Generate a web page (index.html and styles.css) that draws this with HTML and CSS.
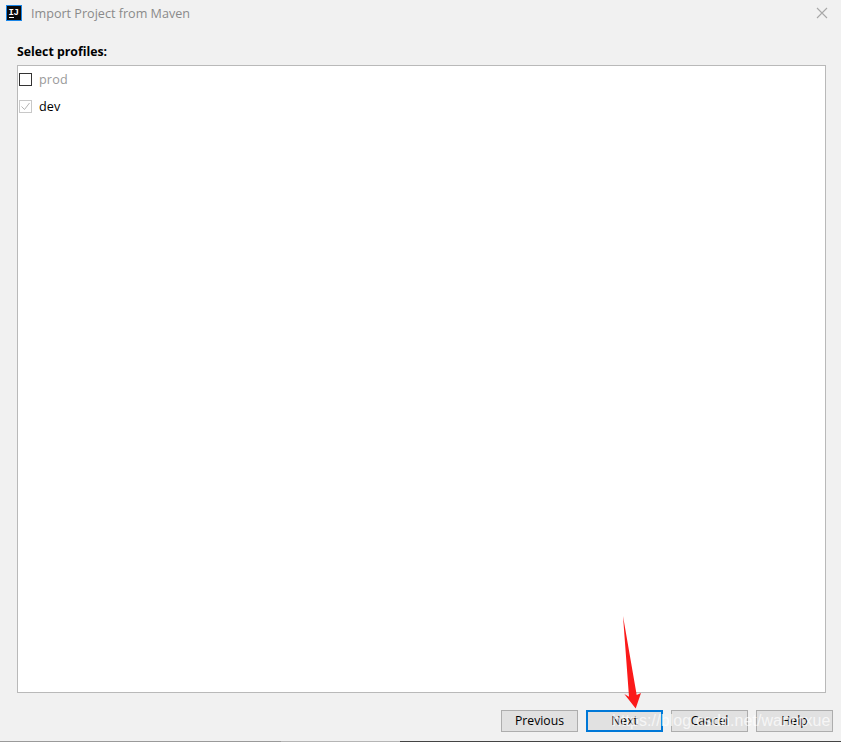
FILE: index.html
```html
<!DOCTYPE html>
<html lang="en">
<head>
<meta charset="utf-8">
<title>Import Project from Maven</title>
<link rel="stylesheet" href="styles.css">
</head>
<body>
<div class="dialog">
  <header class="titlebar">
    <svg class="app-icon" width="16" height="16" viewBox="0 0 16 16">
      <rect x="0.5" y="0.5" width="15" height="15" fill="#0a0a0a" stroke="#1a86e8"/>
      <text class="app-icon-text" x="2.6" y="9.6">IJ</text>
      <path d="M3 12.5h5" stroke="#fff" stroke-width="1"/>
    </svg>
    <span class="title">Import Project from Maven</span>
    <svg class="close" width="12" height="12" viewBox="0 0 12 12">
      <path d="M1 1l10 10M11 1L1 11" stroke="#a8a8a8" stroke-width="1.1" fill="none"/>
    </svg>
  </header>
  <main class="content">
    <div class="heading">Select profiles:</div>
    <div class="panel">
      <label class="row">
        <span class="box box-off"></span>
        <span class="name name-off">prod</span>
      </label>
      <label class="row">
        <span class="box box-on">
          <svg width="13" height="13" viewBox="0 0 13 13"><path d="M2.5 6.5l3 3 5-6.5" fill="none" stroke="#b4b4b4" stroke-width="1"/></svg>
        </span>
        <span class="name">dev</span>
      </label>
    </div>
  </main>
  <footer class="buttons">
    <button class="btn">Previous</button>
    <button class="btn btn-default">Next</button>
    <button class="btn">Cancel</button>
    <button class="btn">Help</button>
  </footer>
  <div class="edge">
    <span class="edge-a"></span><span class="edge-b"></span><span class="edge-c"></span>
  </div>
  <svg class="arrow" width="22" height="94" viewBox="0 0 22 94">
    <path d="M3 1L16.7 80L21 78L15.7 93.6L4.3 79L9 81.7Z" fill="#fb1a1a"/>
  </svg>
  <div class="watermark">https://blog.csdn.net/wanmxue</div>
</div>
</body>
</html>
```
FILE: styles.css
```css
* { box-sizing: border-box; }
html, body { margin: 0; padding: 0; }
body {
  background: #f1f1f1;
  font-family: "Open Sans", "Noto Sans", sans-serif;
  font-size: 12.3px;
  color: #000;
}
.dialog {
  position: relative;
  width: 841px;
  height: 742px;
  display: flex;
  flex-direction: column;
  overflow: hidden;
}
.titlebar {
  height: 28px;
  flex: none;
  display: flex;
  align-items: center;
  padding: 0 13px 2px 6px;
}
.app-icon { flex: none; }
.app-icon-text {
  font-family: "Liberation Mono", monospace;
  font-size: 9px;
  font-weight: 700;
  letter-spacing: -0.6px;
  fill: #fff;
}
.title {
  margin-left: 9px;
  color: #8a8a8a;
  font-size: 12.6px;
  flex: 1;
}
.close { flex: none; }
.content {
  flex: 1;
  display: flex;
  flex-direction: column;
  padding: 16px 15px 0 17px;
  min-height: 0;
}
.heading {
  font-weight: 700;
  font-size: 12.3px;
  line-height: 16px;
  margin-bottom: 5px;
}
.panel {
  flex: 1;
  background: #fff;
  border: 1px solid #b9b9b9;
  padding: 0 0 0 1px;
}
.row {
  display: flex;
  align-items: center;
  height: 27px;
}
.box {
  width: 13px;
  height: 13px;
  display: block;
  flex: none;
  border: 1px solid #333;
  background: #fff;
  position: relative;
}
.box-on { border-color: #c8c8c8; }
.box-on svg { position: absolute; left: -1px; top: -1px; }
.name { margin-left: 7px; line-height: 16px; font-size: 12.6px; letter-spacing: 0.15px; }
.name-off { color: #9a9a9a; }
.buttons {
  flex: none;
  height: 48px;
  display: flex;
  justify-content: flex-end;
  gap: 8px;
  padding: 17px 8px 0 0;
}
.btn {
  width: 77px;
  height: 22px;
  border: 1px solid #adadad;
  background: #e1e1e1;
  font: 12.2px "Open Sans", "Noto Sans", sans-serif;
  color: #000;
  padding: 0 0 1px;
}
.btn-default { border: 2px solid #0078d7; }
.edge {
  flex: none;
  height: 1px;
  display: flex;
}
.edge-a { width: 281px; background: #9a9a9a; }
.edge-b { width: 119px; background: #b5b5b5; }
.edge-c { flex: 1; background: #444; }
.arrow {
  position: absolute;
  left: 620px;
  top: 615px;
}
.watermark {
  position: absolute;
  left: 612px;
  top: 711px;
  font-family: "Liberation Sans", sans-serif;
  font-size: 16px;
  letter-spacing: 0.08px;
  line-height: 20px;
  color: rgba(255, 255, 255, 0.72);
  white-space: nowrap;
}
```
